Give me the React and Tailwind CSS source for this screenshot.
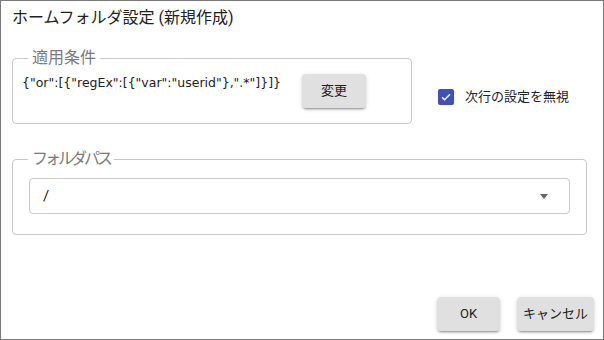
import React from 'react';

const btn =
  'h-[34px] rounded-[4px] bg-[#e0e0e0] text-[13px] text-[#212121] shadow-[0_3px_1px_-2px_rgba(0,0,0,0.2),0_2px_2px_0_rgba(0,0,0,0.14),0_1px_5px_0_rgba(0,0,0,0.12)]';

const App = () => {
  return (
    <div className="w-[604px] h-[340px] bg-white border border-[#7a7a7a] flex flex-col font-['Roboto','Noto_Sans_CJK_JP',sans-serif] text-[#212121]">
      <h2 className="pl-[11px] pt-[6px] text-[16px] leading-[22px]">ホームフォルダ設定 (新規作成)</h2>

      <div className="flex items-start pl-[11px] mt-[20px]">
        <fieldset className="w-[400px] border border-[#c8c8c8] rounded-[4px]">
          <legend className="ml-[15px] px-[4px] text-[16px] leading-[18px] text-[#7a7a7a]">適用条件</legend>
          <div className="flex items-start pl-[9px] pt-[7px] pb-[15px]">
            <div className="w-[280px] mt-[1px] font-['DejaVu_Sans',sans-serif] text-[12.5px] leading-[16px]">
              {'{"or":[{"regEx":[{"var":"userid"},".*"]}]}'}
            </div>
            <button className={`${btn} w-[64px]`}>変更</button>
          </div>
        </fieldset>

        <label className="flex items-center ml-[26px] mt-[40px]">
          <span className="w-[16px] h-[16px] rounded-[2px] bg-[#3f51b5] flex items-center justify-center">
            <svg width="12" height="12" viewBox="0 0 24 24">
              <path d="M4 12.5l5 5L20 6.5" fill="none" stroke="white" strokeWidth="3" />
            </svg>
          </span>
          <span className="ml-[11px] text-[13px] leading-[16px]">次行の設定を無視</span>
        </label>
      </div>

      <div className="pl-[11px] mt-[26px]">
        <fieldset className="w-[575px] border border-[#c8c8c8] rounded-[4px]">
          <legend className="ml-[15px] px-[4px] text-[16px] leading-[18px] tracking-[-3px] text-[#7a7a7a]">フォルダパス</legend>
          <div className="px-[16px] pt-[10px] pb-[20px]">
            <div className="h-[36px] border border-[#c8c8c8] rounded-[4px] flex items-center justify-between pl-[13px] pr-[21px]">
              <span className="text-[15px]">/</span>
              <svg width="8" height="5" viewBox="0 0 8 5">
                <path d="M0 0h8L4 5z" fill="#666" />
              </svg>
            </div>
          </div>
        </fieldset>
      </div>

      <div className="mt-auto flex justify-end gap-[17px] pr-[9px] pb-[8px]">
        <button className={`${btn} w-[63px]`}>OK</button>
        <button className={`${btn} w-[77px]`}>キャンセル</button>
      </div>
    </div>
  );
};

export default App;
